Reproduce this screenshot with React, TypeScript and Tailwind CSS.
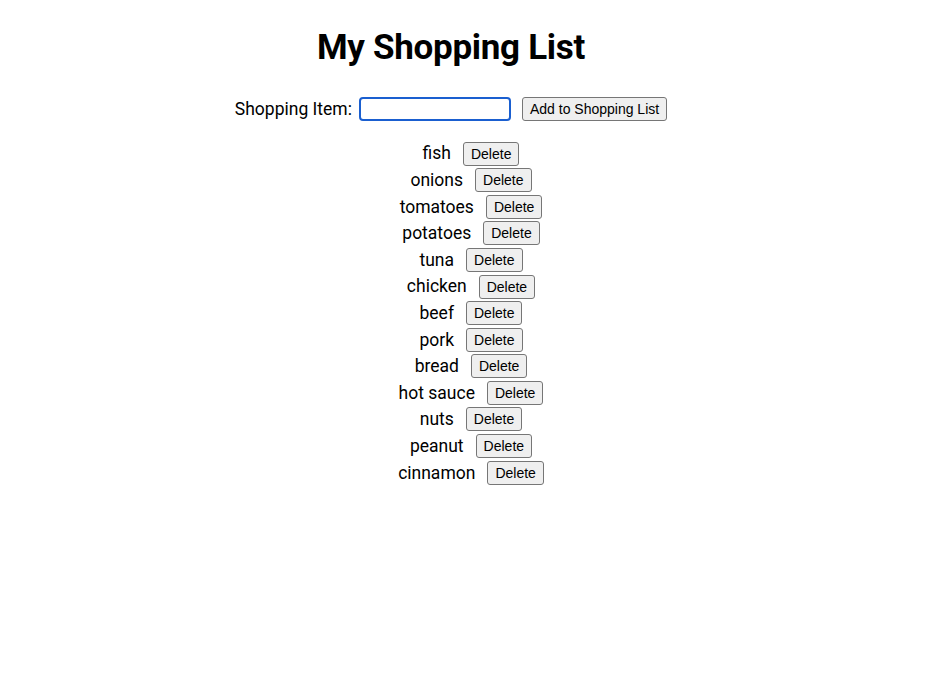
import { useState } from "react";

const initialItems = [
  "fish",
  "onions",
  "tomatoes",
  "potatoes",
  "tuna",
  "chicken",
  "beef",
  "pork",
  "bread",
  "hot sauce",
  "nuts",
  "peanut",
  "cinnamon",
];

export default function App() {
  const [items, setItems] = useState(initialItems);
  const [value, setValue] = useState("");

  const addItem = () => {
    if (!value.trim()) return;
    setItems([...items, value.trim()]);
    setValue("");
  };

  return (
    <div className="w-[902px] text-center text-black font-['Roboto',sans-serif]">
      <h1 className="pt-[30px] text-[35px] leading-[35px] font-bold tracking-[-0.3px]">
        My Shopping List
      </h1>

      <div className="mt-[31px] flex items-center justify-center text-[17.5px]">
        <label htmlFor="item" className="mr-[7px]">
          Shopping Item:
        </label>
        <input
          id="item"
          autoFocus
          value={value}
          onChange={(e) => setValue(e.target.value)}
          className="h-[24px] w-[152px] rounded-[4px] border-2 border-[#1a5fd0] bg-white px-1 text-[14px] outline-none"
        />
        <button
          onClick={addItem}
          className="ml-[11px] h-[24px] rounded-[3px] border border-[#767676] bg-[#efefef] px-[7px] text-[14px] leading-none font-['Liberation_Sans',Arial,sans-serif]"
        >
          Add to Shopping List
        </button>
      </div>

      <ul className="mt-[18px] pl-10 text-[17.5px]">
        {items.map((item, i) => (
          <li key={i} className="flex h-[26.6px] items-center justify-center gap-3">
            <span>{item}</span>
            <button
              onClick={() => setItems(items.filter((_, j) => j !== i))}
              className="h-[24px] rounded-[3px] border border-[#767676] bg-[#efefef] px-[7px] text-[14px] leading-none font-['Liberation_Sans',Arial,sans-serif]"
            >
              Delete
            </button>
          </li>
        ))}
      </ul>
    </div>
  );
}
